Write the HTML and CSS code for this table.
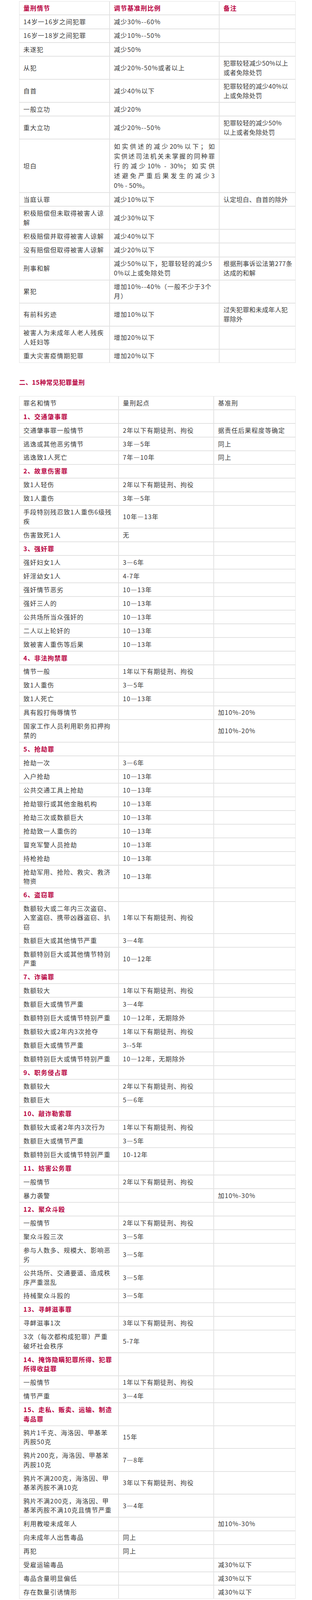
FILE: index.html
```html
<!DOCTYPE html>
<html lang="zh-CN">
<head>
<meta charset="utf-8">
<title>量刑情节与常见犯罪量刑</title>
<link rel="stylesheet" href="styles.css">
</head>
<body>
<div class="page">
<table class="grid t1">
<colgroup><col class="w1"><col class="w2"><col class="w3"></colgroup>
<tr class="head"><td>量刑情节</td><td>调节基准刑比例</td><td>备注</td></tr>
<tr><td>14岁一16岁之间犯罪</td><td>减少30%--60%</td><td class="note"></td></tr>
<tr><td>16岁一18岁之间犯罪</td><td>减少10%--50%</td><td class="note"></td></tr>
<tr><td>未遂犯</td><td>减少50%</td><td class="note"></td></tr>
<tr><td>从犯</td><td>减少20%-50%或者以上</td><td class="note">犯罪较轻减少50%以上<br>或者免除处罚</td></tr>
<tr><td>自首</td><td>减少40%以下</td><td class="note">犯罪较轻的减少40%以<br>上或免除处罚</td></tr>
<tr><td>一般立功</td><td>减少20%</td><td class="note"></td></tr>
<tr><td>重大立功</td><td>减少20%--50%</td><td class="note">犯罪较轻的减少50%<br>以上或者免除处罚</td></tr>
<tr><td>坦白</td><td class="tb"><span class="jl">如实供述的减少20%以下；如</span><span class="jl">实供述司法机关未掌握的同种罪</span><span class="jl">行的减少10% - 30%；如实供</span><span class="jl">述避免严重后果发生的减少3</span><span class="last">0% - 50%。</span></td><td class="note"></td></tr>
<tr><td>当庭认罪</td><td>减少10%以下</td><td class="note">认定坦白、自首的除外</td></tr>
<tr><td>积极赔偿但未取得被害人谅<br>解</td><td>减少30%以下</td><td class="note"></td></tr>
<tr><td>积极赔偿并取得被害人谅解</td><td>减少40%以下</td><td class="note"></td></tr>
<tr><td>没有赔偿但取得被害人谅解</td><td>减少20%以下</td><td class="note"></td></tr>
<tr><td>刑事和解</td><td>减少50%以下，犯罪较轻的减少5<br>0%以上或免除处罚</td><td class="note">根据刑事诉讼法第277条<br>达成的和解</td></tr>
<tr><td>累犯</td><td>增加10%--40%（一般不少于3个<br>月）</td><td class="note"></td></tr>
<tr><td>有前科劣迹</td><td>增加10%以下</td><td class="note">过失犯罪和未成年人犯<br>罪除外</td></tr>
<tr><td>被害人为未成年人老人残疾<br>人妊妇等</td><td>增加20%以下</td><td class="note"></td></tr>
<tr><td>重大灾害疫情期犯罪</td><td>增加20%以下</td><td class="note"></td></tr>
</table>

<p class="section-title">二、15种常见犯罪量刑</p>

<table class="grid t2">
<colgroup><col class="v1"><col class="v2"><col class="v3"></colgroup>
<tr><td>罪名和情节</td><td>量刑起点</td><td>基准刑</td></tr>
<tr class="sec"><td>1、交通肇事罪</td><td></td><td></td></tr>
<tr><td>交通肇事罪一般情节</td><td>2年以下有期徒刑、拘役</td><td>据责任后果程度等确定</td></tr>
<tr><td>逃逸或其他恶劣情节</td><td>3年—5年</td><td>同上</td></tr>
<tr><td>逃逸致1人死亡</td><td>7年—10年</td><td>同上</td></tr>
<tr class="sec"><td>2、故意伤害罪</td><td></td><td></td></tr>
<tr><td>致1人轻伤</td><td>2年以下有期徒刑、拘役</td><td></td></tr>
<tr><td>致1人重伤</td><td>3年—5年</td><td></td></tr>
<tr><td>手段特别残忍致1人重伤6级残<br>疾</td><td>10年—13年</td><td></td></tr>
<tr><td>伤害致死1人</td><td>无</td><td></td></tr>
<tr class="sec"><td>3、强奸罪</td><td></td><td></td></tr>
<tr><td>强奸妇女1人</td><td>3—6年</td><td></td></tr>
<tr><td>奸淫幼女1人</td><td>4-7年</td><td></td></tr>
<tr><td>强奸情节恶劣</td><td>10—13年</td><td></td></tr>
<tr><td>强奸三人的</td><td>10—13年</td><td></td></tr>
<tr><td>公共场所当众强奸的</td><td>10—13年</td><td></td></tr>
<tr><td>二人以上轮奸的</td><td>10—13年</td><td></td></tr>
<tr><td>致被害人重伤等后果</td><td>10—13年</td><td></td></tr>
<tr class="sec"><td>4、非法拘禁罪</td><td></td><td></td></tr>
<tr><td>情节一般</td><td>1年以下有期徒刑、拘役</td><td></td></tr>
<tr><td>致1人重伤</td><td>3—5年</td><td></td></tr>
<tr><td>致1人死亡</td><td>10—13年</td><td></td></tr>
<tr><td>具有殴打侮辱情节</td><td></td><td>加10%-20%</td></tr>
<tr><td>国家工作人员利用职务扣押拘<br>禁的</td><td></td><td>加10%-20%</td></tr>
<tr class="sec"><td>5、抢劫罪</td><td></td><td></td></tr>
<tr><td>抢劫一次</td><td>3—6年</td><td></td></tr>
<tr><td>入户抢劫</td><td>10—13年</td><td></td></tr>
<tr><td>公共交通工具上抢劫</td><td>10—13年</td><td></td></tr>
<tr><td>抢劫银行或其他金融机构</td><td>10—13年</td><td></td></tr>
<tr><td>抢劫三次或数额巨大</td><td>10—13年</td><td></td></tr>
<tr><td>抢劫致一人重伤的</td><td>10—13年</td><td></td></tr>
<tr><td>冒充军警人员抢劫</td><td>10—13年</td><td></td></tr>
<tr><td>持枪抢劫</td><td>10—13年</td><td></td></tr>
<tr><td>抢劫军用、抢险、救灾、救济<br>物资</td><td>10—13年</td><td></td></tr>
<tr class="sec"><td>6、盗窃罪</td><td></td><td></td></tr>
<tr><td>数额较大或二年内三次盗窃、<br>入室盗窃、携带凶器盗窃、扒<br>窃</td><td>1年以下有期徒刑、拘役</td><td></td></tr>
<tr><td>数额巨大或其他情节严重</td><td>3—4年</td><td></td></tr>
<tr><td>数额特别巨大或其他情节特别<br>严重</td><td>10—12年</td><td></td></tr>
<tr class="sec"><td>7、诈骗罪</td><td></td><td></td></tr>
<tr><td>数额较大</td><td>1年以下有期徒刑、拘役</td><td></td></tr>
<tr><td>数额巨大或情节严重</td><td>3—4年</td><td></td></tr>
<tr><td>数额特别巨大或情节特别严重</td><td>10—12年，无期除外</td><td></td></tr>
<tr><td>数额较大或2年内3次抢夺</td><td>1年以下有期徒刑、拘役</td><td></td></tr>
<tr><td>数额巨大或情节严重</td><td>3--5年</td><td></td></tr>
<tr><td>数额特别巨大或情节特别严重</td><td>10—12年，无期除外</td><td></td></tr>
<tr class="sec"><td>9、职务侵占罪</td><td></td><td></td></tr>
<tr><td>数额较大</td><td>2年以下有期徒刑、拘役</td><td></td></tr>
<tr><td>数额巨大</td><td>5—6年</td><td></td></tr>
<tr class="sec"><td>10、敲诈勒索罪</td><td></td><td></td></tr>
<tr><td>数额较大或者2年内3次行为</td><td>1年以下有期徒刑、拘役</td><td></td></tr>
<tr><td>数额巨大或情节严重</td><td>3—5年</td><td></td></tr>
<tr><td>数额特别巨大或情节特别严重</td><td>10-12年</td><td></td></tr>
<tr class="sec"><td>11、妨害公务罪</td><td></td><td></td></tr>
<tr><td>一般情节</td><td>2年以下有期徒刑、拘役</td><td></td></tr>
<tr><td>暴力袭警</td><td></td><td>加10%-30%</td></tr>
<tr class="sec"><td>12、聚众斗殴</td><td></td><td></td></tr>
<tr><td>一般情节</td><td>2年以下有期徒刑、拘役</td><td></td></tr>
<tr><td>聚众斗殴三次</td><td>3—5年</td><td></td></tr>
<tr><td>参与人数多、规模大、影响恶<br>劣</td><td>3—5年</td><td></td></tr>
<tr><td>公共场所、交通要道、造成秩<br>序严重混乱</td><td>3—5年</td><td></td></tr>
<tr><td>持械聚众斗殴的</td><td>3—5年</td><td></td></tr>
<tr class="sec"><td>13、寻衅滋事罪</td><td></td><td></td></tr>
<tr><td>寻衅滋事1次</td><td>3年以下有期徒刑、拘役</td><td></td></tr>
<tr><td>3次（每次都构成犯罪）严重<br>破坏社会秩序</td><td>5-7年</td><td></td></tr>
<tr class="sec"><td>14、掩饰隐瞒犯罪所得、犯罪<br>所得收益罪</td><td></td><td></td></tr>
<tr><td>一般情节</td><td>1年以下有期徒刑、拘役</td><td></td></tr>
<tr><td>情节严重</td><td>3—4年</td><td></td></tr>
<tr class="sec"><td>15、走私、贩卖、运输、制造<br>毒品罪</td><td></td><td></td></tr>
<tr><td>鸦片1千克、海洛因、甲基苯<br>丙胺50克</td><td>15年</td><td></td></tr>
<tr><td>鸦片200克，海洛因、甲基苯<br>丙胺10克</td><td>7—8年</td><td></td></tr>
<tr><td>鸦片不满200克，海洛因、甲<br>基苯丙胺不满10克</td><td>3年以下有期徒刑、拘役</td><td></td></tr>
<tr><td>鸦片不满200克，海洛因、甲<br>基苯丙胺不满10克且情节严重</td><td>3—4年</td><td></td></tr>
<tr><td>利用教唆未成年人</td><td></td><td>加10%-30%</td></tr>
<tr><td>向未成年人出售毒品</td><td>同上</td><td></td></tr>
<tr><td>再犯</td><td>同上</td><td></td></tr>
<tr><td>受雇运输毒品</td><td></td><td>减30%以下</td></tr>
<tr><td>毒品含量明显偏低</td><td></td><td>减30%以下</td></tr>
<tr><td>存在数量引诱情形</td><td></td><td>减30%以下</td></tr>
</table>
</div>
</body>
</html>
```
FILE: styles.css
```css
html, body {
  margin: 0;
  padding: 0;
  background: #ffffff;
}

body {
  font-family: "Noto Sans CJK SC", "Noto Sans", "DejaVu Sans", sans-serif;
  font-size: 16px;
  color: #3a3a3a;
}

.page {
  padding: 3px 42px 0 49px;
}

.grid {
  width: 100%;
  table-layout: fixed;
  border-collapse: separate;
  border-spacing: 0;
}

.grid td {
  border: 1px solid #e2e2e2;
  padding: 4.75px 10px;
  white-space: nowrap;
  letter-spacing: 1.2px;
  vertical-align: middle;
  text-align: left;
}

.t1 td {
  line-height: 23.75px;
}

.t2 td {
  line-height: 23.47px;
}

.w1 { width: 232px; }
.w2 { width: 281px; }
.w3 { width: 196px; }

.v1 { width: 255px; }
.v2 { width: 244px; }
.v3 { width: 210px; }

.head td,
.sec td {
  color: #b8003f;
  font-weight: bold;
}

.t1 td.note {
  letter-spacing: 0.5px;
}

.t1 td.tb {
  line-height: 25px;
  letter-spacing: 0.5px;
}

.tb .jl,
.tb .last {
  display: block;
  white-space: normal;
}

.tb .jl {
  text-align: justify;
  text-align-last: justify;
}

.section-title {
  margin: 0;
  padding: 36.8px 0 24.3px;
  line-height: 24px;
  font-size: 16px;
  font-weight: bold;
  letter-spacing: 0.5px;
  color: #b8003f;
}
```
